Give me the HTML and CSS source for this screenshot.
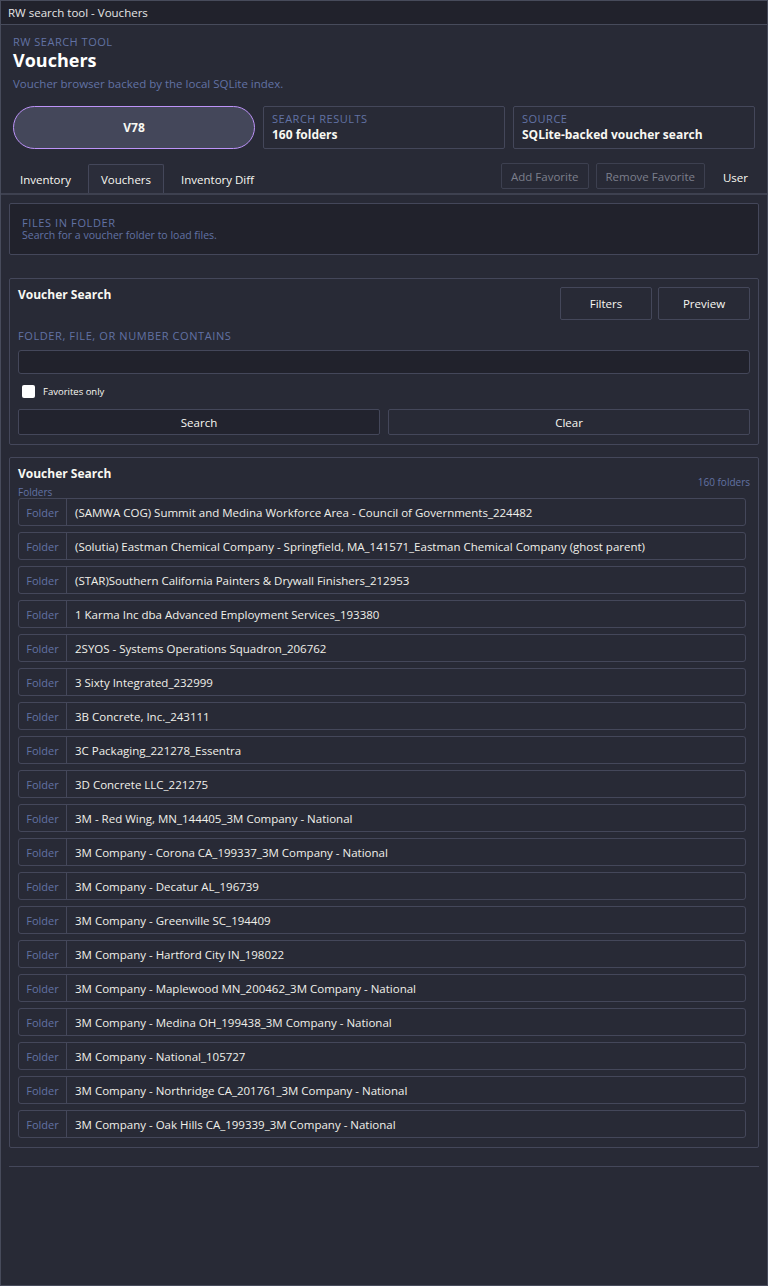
FILE: index.html
```html
<!DOCTYPE html>
<html lang="en">
<head>
    <meta charset="UTF-8">
    <title>RW search tool - Vouchers</title>
    <link rel="stylesheet" href="styles.css">
</head>
<body>
    <div class="app">
        <div class="titlebar">RW search tool - Vouchers</div>

        <header class="hero">
            <div class="eyebrow">RW SEARCH TOOL</div>
            <h1>Vouchers</h1>
            <p class="subtitle">Voucher browser backed by the local SQLite index.</p>
        </header>

        <div class="stats">
            <div class="pill">V78</div>
            <div class="stat">
                <span class="stat-label">SEARCH RESULTS</span>
                <span class="stat-value">160 folders</span>
            </div>
            <div class="stat">
                <span class="stat-label">SOURCE</span>
                <span class="stat-value">SQLite-backed voucher search</span>
            </div>
        </div>

        <nav class="tabbar">
            <div class="tabs">
                <div class="tab">Inventory</div>
                <div class="tab active">Vouchers</div>
                <div class="tab">Inventory Diff</div>
            </div>
            <div class="tab-actions">
                <button class="btn-small" disabled>Add Favorite</button>
                <button class="btn-small" disabled>Remove Favorite</button>
                <span class="user">User</span>
            </div>
        </nav>

        <main class="page">
            <section class="files-box">
                <div class="label">FILES IN FOLDER</div>
                <div class="files-hint">Search for a voucher folder to load files.</div>
            </section>

            <section class="group">
                <div class="group-head">
                    <div class="group-title">Voucher Search</div>
                    <div class="head-buttons">
                        <button class="btn-tall">Filters</button>
                        <button class="btn-tall">Preview</button>
                    </div>
                </div>
                <div class="label field-label">FOLDER, FILE, OR NUMBER CONTAINS</div>
                <input type="text" class="search-input">
                <label class="check-row">
                    <span class="checkbox"></span>
                    <span>Favorites only</span>
                </label>
                <div class="action-row">
                    <button class="btn-wide primary">Search</button>
                    <button class="btn-wide">Clear</button>
                </div>
            </section>

            <section class="group results">
                <div class="results-head">
                    <div class="group-title">Voucher Search</div>
                    <div class="count">160 folders</div>
                </div>
                <div class="small-label">Folders</div>
                <div class="folder-list" id="folderList"></div>
            </section>

            <hr class="divider">
        </main>
    </div>

    <script>
        const folders = [
            '(SAMWA COG) Summit and Medina Workforce Area - Council of Governments_224482',
            '(Solutia) Eastman Chemical Company - Springfield, MA_141571_Eastman Chemical Company (ghost parent)',
            '(STAR)Southern California Painters & Drywall Finishers_212953',
            '1 Karma Inc dba Advanced Employment Services_193380',
            '2SYOS - Systems Operations Squadron_206762',
            '3 Sixty Integrated_232999',
            '3B Concrete, Inc._243111',
            '3C Packaging_221278_Essentra',
            '3D Concrete LLC_221275',
            '3M - Red Wing, MN_144405_3M Company - National',
            '3M Company - Corona CA_199337_3M Company - National',
            '3M Company - Decatur AL_196739',
            '3M Company - Greenville SC_194409',
            '3M Company - Hartford City IN_198022',
            '3M Company - Maplewood MN_200462_3M Company - National',
            '3M Company - Medina OH_199438_3M Company - National',
            '3M Company - National_105727',
            '3M Company - Northridge CA_201761_3M Company - National',
            '3M Company - Oak Hills CA_199339_3M Company - National'
        ];

        const list = document.getElementById('folderList');
        folders.forEach(function (name) {
            const row = document.createElement('div');
            row.className = 'folder-row';
            const tag = document.createElement('span');
            tag.className = 'folder-tag';
            tag.textContent = 'Folder';
            const text = document.createElement('span');
            text.className = 'folder-name';
            text.textContent = name;
            row.appendChild(tag);
            row.appendChild(text);
            list.appendChild(row);
        });
    </script>
</body>
</html>
```

FILE: styles.css
```css
body {
    margin: 0;
    background-color: #282a36;
    font-family: "Open Sans", "Noto Sans", sans-serif;
    color: #f8f8f2;
}
.app {
    height: 1286px;
    box-sizing: border-box;
    border: 1px solid #474b5b;
    background-color: #282a36;
}
.titlebar {
    height: 23px;
    line-height: 23px;
    padding-left: 7px;
    font-size: 11.5px;
    background-color: #21222c;
    border-bottom: 1px solid #474b5b;
    color: #e6e6e6;
}
.hero {
    padding: 10px 12px 0;
}
.eyebrow {
    font-size: 11px;
    line-height: 14px;
    letter-spacing: 0.5px;
    color: #6272a4;
}
.hero h1 {
    margin: 0;
    font-size: 18px;
    line-height: 22px;
    font-weight: 700;
    color: #ffffff;
}
.subtitle {
    margin: 5px 0 0;
    font-size: 11.5px;
    line-height: 16px;
    color: #6272a4;
}
.stats {
    display: grid;
    grid-template-columns: repeat(3, 1fr);
    gap: 8px;
    padding: 0 12px;
    margin-top: 14px;
}
.pill {
    height: 43px;
    box-sizing: border-box;
    border: 1px solid #bd93f9;
    border-radius: 22px;
    background-color: #44475a;
    display: flex;
    align-items: center;
    justify-content: center;
    font-size: 12px;
    font-weight: 700;
}
.stat {
    height: 43px;
    box-sizing: border-box;
    border: 1px solid #44475a;
    border-radius: 2px;
    padding: 5px 8px 0;
    display: flex;
    flex-direction: column;
}
.stat-label {
    font-size: 11px;
    line-height: 14px;
    letter-spacing: 0.5px;
    color: #6272a4;
}
.stat-value {
    margin-top: 1px;
    font-size: 12px;
    line-height: 16px;
    font-weight: 700;
}
.tabbar {
    display: flex;
    justify-content: space-between;
    height: 30px;
    margin-top: 14px;
    border-bottom: 2px solid #3e4150;
    padding-left: 6px;
}
.tabs {
    display: flex;
    gap: 4px;
}
.tab {
    padding: 0 12px;
    margin-top: 1px;
    font-size: 11.5px;
    display: flex;
    align-items: center;
    border: 1px solid transparent;
    border-bottom: none;
}
.tab.active {
    border-color: #44475a;
    background-color: #2b2d3a;
    border-radius: 2px 2px 0 0;
}
.tab-actions {
    display: flex;
    align-items: flex-start;
    padding-right: 19px;
}
.btn-small {
    height: 26px;
    padding: 0 9px;
    margin-right: 7px;
    font-family: inherit;
    font-size: 11.5px;
    color: #7c7f8c;
    background-color: #282a36;
    border: 1px solid #3d4050;
    border-radius: 2px;
}
.user {
    margin-left: 11px;
    line-height: 30px;
    font-size: 11.5px;
}
.page {
    padding: 8px 8px 0;
}
.files-box {
    background-color: #21222c;
    border: 1px solid #44475a;
    border-radius: 2px;
    padding: 12px 12px 12px;
}
.label {
    font-size: 11px;
    line-height: 13px;
    letter-spacing: 0.6px;
    color: #6272a4;
}
.files-hint {
    font-size: 10.5px;
    line-height: 13px;
    color: #6272a4;
}
.group {
    margin-top: 23px;
    border: 1px solid #44475a;
    border-radius: 2px;
    padding: 8px 8px 9px;
}
.group-head {
    display: flex;
    justify-content: space-between;
}
.group-title {
    font-size: 12px;
    line-height: 16px;
    font-weight: 700;
}
.head-buttons {
    display: flex;
    gap: 6px;
}
.btn-tall {
    width: 92px;
    height: 33px;
    font-family: inherit;
    font-size: 11.5px;
    color: #f8f8f2;
    background-color: #282a36;
    border: 1px solid #44475a;
    border-radius: 2px;
}
.field-label {
    margin-top: 9px;
    line-height: 14px;
}
.search-input {
    display: block;
    width: 100%;
    height: 24px;
    box-sizing: border-box;
    margin-top: 7px;
    background-color: #21222c;
    border: 1px solid #44475a;
    border-radius: 3px;
    color: #f8f8f2;
}
.check-row {
    display: flex;
    align-items: center;
    gap: 8px;
    margin-top: 10px;
    padding-left: 4px;
    height: 14px;
    font-size: 9.5px;
}
.checkbox {
    width: 13px;
    height: 13px;
    background-color: #ffffff;
    border-radius: 2px;
}
.action-row {
    display: grid;
    grid-template-columns: 1fr 1fr;
    gap: 8px;
    margin-top: 11px;
}
.btn-wide {
    height: 26px;
    font-family: inherit;
    font-size: 11.5px;
    color: #f8f8f2;
    background-color: #282a36;
    border: 1px solid #44475a;
    border-radius: 2px;
}
.btn-wide.primary {
    background-color: #22232e;
}
.results {
    margin-top: 12px;
}
.results-head {
    display: flex;
    justify-content: space-between;
    align-items: flex-start;
    height: 20px;
}
.count {
    margin-top: 10px;
    font-size: 10px;
    line-height: 12px;
    color: #6272a4;
}
.small-label {
    font-size: 10px;
    line-height: 12px;
    color: #6272a4;
}
.folder-list {
    display: flex;
    flex-direction: column;
    gap: 6px;
    margin-right: 4px;
}
.folder-row {
    display: flex;
    height: 28px;
    box-sizing: border-box;
    border: 1px solid #44475a;
    border-radius: 3px;
}
.folder-tag {
    width: 47px;
    flex: none;
    border-right: 1px solid #44475a;
    display: flex;
    align-items: center;
    justify-content: center;
    font-size: 11px;
    color: #6272a4;
}
.folder-name {
    padding-left: 8px;
    display: flex;
    align-items: center;
    font-size: 11.5px;
    white-space: nowrap;
    color: #f0f0ea;
}
.divider {
    margin: 18px 0 0;
    border: none;
    border-top: 1px solid #44475a;
}
```
